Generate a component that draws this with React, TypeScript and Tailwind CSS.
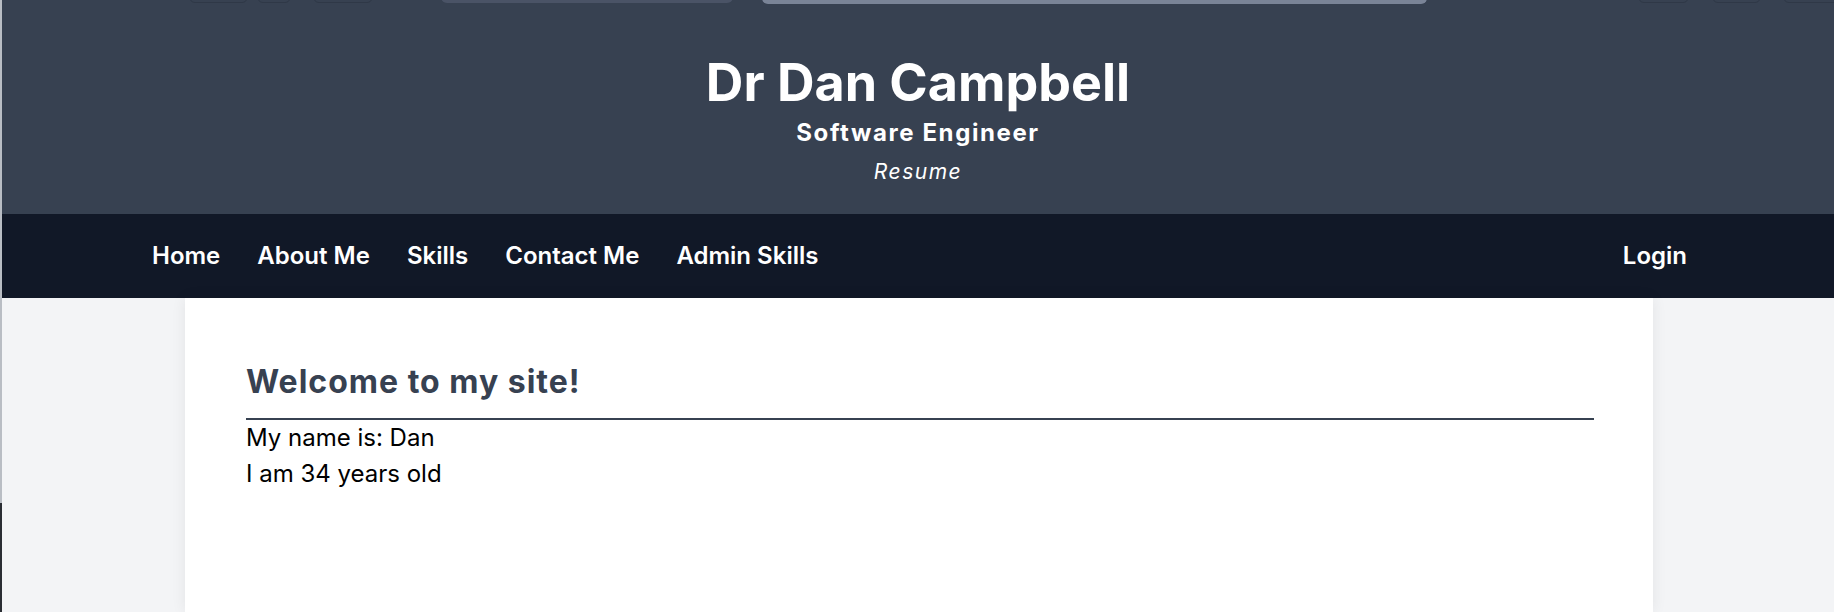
import React from "react";

// Navigation links shown on the left of the nav bar
const links = ["Home", "About Me", "Skills", "Contact Me", "Admin Skills"];

/**
 * Browser chrome remnants peeking in at the very top edge
**/
function TopEdge() {
  return (
    <>
      <div className="absolute top-[-20px] left-[187px] h-[23px] w-[59px] rounded-md border border-[#2f3847]" />
      <div className="absolute top-[-20px] left-[255px] h-[23px] w-[34px] rounded-md border border-[#2f3847]" />
      <div className="absolute top-[-20px] left-[311px] h-[23px] w-[60px] rounded-md border border-[#2f3847]" />
      <div className="absolute top-[-20px] left-[439px] h-[23px] w-[292px] rounded-md bg-[#4a5366]" />
      <div className="absolute top-[-20px] left-[760px] h-[24px] w-[665px] rounded-md bg-[#7a8497]" />
      <div className="absolute top-[-20px] left-[1636px] h-[23px] w-[51px] rounded-md border border-[#2f3847]" />
      <div className="absolute top-[-20px] left-[1710px] h-[23px] w-[49px] rounded-md border border-[#2f3847]" />
      <div className="absolute top-[-20px] left-[1781px] h-[23px] w-[70px] rounded-md border border-[#2f3847]" />
    </>
  );
}

export default function App() {
  return (
    <div
      className="flex min-h-[612px] bg-[#f3f4f6]"
      style={{ fontFamily: "Inter, 'Noto Sans', sans-serif" }}
    >
      {/* Thin window edge on the left */}
      <div className="flex w-[2px] shrink-0 flex-col">
        <div className="h-[503px] bg-[#b9bdc4]" />
        <div className="flex-1 bg-[#2a2d33]" />
      </div>

      <div className="flex flex-1 flex-col">
        {/* Header */}
        <header className="relative flex h-[214px] flex-col items-center overflow-hidden bg-[#374151] pt-[53px] text-white">
          <TopEdge />
          <h1 className="text-[52px] leading-[60px] font-bold">Dr Dan Campbell</h1>
          <h2 className="mt-[5px] text-[24px] leading-[30px] font-bold tracking-[1.6px]">Software Engineer</h2>
          <p className="mt-[10px] text-[21px] leading-[28px] tracking-[1.5px] italic">Resume</p>
        </header>

        {/* Nav bar */}
        <nav className="flex h-[84px] items-center justify-between bg-[#111827] pr-[147px] pl-[150px] text-white">
          <div className="flex items-center gap-[37px]">
            {links.map((l) => (
              <a key={l} href="#" className="text-[24px] leading-[30px] font-semibold">
                {l}
              </a>
            ))}
          </div>
          <a href="#" className="text-[24px] leading-[30px] font-semibold">
            Login
          </a>
        </nav>

        {/* Main card */}
        <main className="flex flex-1 justify-center pl-[2px]">
          <div className="w-[1468px] bg-white pt-[66px] pr-[59px] pl-[61px] shadow-[0_0_14px_rgba(0,0,0,0.07)]">
            <h3 className="border-b-2 border-[#374151] pb-[18px] text-[32px] leading-[36px] font-bold tracking-[1px] text-[#374151]">
              Welcome to my site!
            </h3>
            <p className="text-[24px] leading-[36px] text-black">My name is: Dan</p>
            <p className="text-[24px] leading-[36px] text-black">I am 34 years old</p>
          </div>
        </main>
      </div>
    </div>
  );
}
